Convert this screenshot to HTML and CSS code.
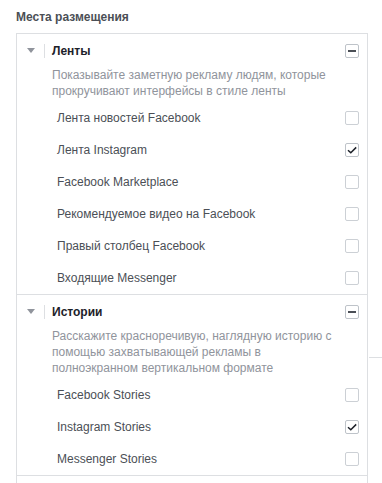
FILE: index.html
```html
<!DOCTYPE html>
<html lang="ru">
<head>
<meta charset="utf-8">
<link rel="stylesheet" href="styles.css">
</head>
<body>
<div class="page">
  <div class="title">Места размещения</div>
  <div class="box">
    <section class="group">
      <div class="group-head">
        <span class="caret"></span>
        <span class="sep"></span>
        <span class="group-name">Ленты</span>
        <span class="cb cb-mixed"></span>
      </div>
      <p class="desc">Показывайте заметную рекламу людям, которые прокручивают интерфейсы в стиле ленты</p>
      <ul class="items">
        <li class="item"><span>Лента новостей Facebook</span><span class="cb"></span></li>
        <li class="item"><span>Лента Instagram</span><span class="cb cb-checked"><svg viewBox="0 0 12 12" width="12" height="12"><path d="M2 6.2 L4.8 8.8 L10.2 3.4" fill="none" stroke="#1d2129" stroke-width="1.5"/></svg></span></li>
        <li class="item"><span>Facebook Marketplace</span><span class="cb"></span></li>
        <li class="item"><span>Рекомендуемое видео на Facebook</span><span class="cb"></span></li>
        <li class="item"><span>Правый столбец Facebook</span><span class="cb"></span></li>
        <li class="item"><span>Входящие Messenger</span><span class="cb"></span></li>
      </ul>
    </section>
    <section class="group">
      <div class="group-head">
        <span class="caret"></span>
        <span class="sep"></span>
        <span class="group-name">Истории</span>
        <span class="cb cb-mixed"></span>
      </div>
      <p class="desc">Расскажите красноречивую, наглядную историю с помощью захватывающей рекламы в полноэкранном вертикальном формате</p>
      <ul class="items">
        <li class="item"><span>Facebook Stories</span><span class="cb"></span></li>
        <li class="item"><span>Instagram Stories</span><span class="cb cb-checked"><svg viewBox="0 0 12 12" width="12" height="12"><path d="M2 6.2 L4.8 8.8 L10.2 3.4" fill="none" stroke="#1d2129" stroke-width="1.5"/></svg></span></li>
        <li class="item"><span>Messenger Stories</span><span class="cb"></span></li>
      </ul>
    </section>
    <section class="group group-empty"></section>
  </div>
</div>
<div class="side-line"></div>
</body>
</html>
```
FILE: styles.css
```css
html, body {
  margin: 0;
  padding: 0;
  background: #ffffff;
}
body {
  font-family: "Liberation Sans", Arial, sans-serif;
  font-size: 12px;
  color: #4b4f56;
  overflow: hidden;
  height: 483px;
}
.page {
  padding: 9px 14px 0 16px;
}
.title {
  font-weight: bold;
  line-height: 16px;
  color: #4b4f56;
}
.box {
  margin-top: 8px;
  border: 1px solid #dddfe2;
  border-bottom: none;
  height: 460px;
}
.group {
  border-bottom: 1px solid #dddfe2;
  padding-bottom: 0;
}
.group-empty {
  border-bottom: none;
}
.group-head {
  display: flex;
  align-items: center;
  height: 16px;
  padding: 9px 8px 0 10px;
}
.caret {
  width: 0;
  height: 0;
  border-left: 4px solid transparent;
  border-right: 4px solid transparent;
  border-top: 5px solid #90949c;
  margin-top: -1px;
}
.sep {
  width: 1px;
  height: 14px;
  background: #dddfe2;
  margin-left: 9px;
}
.group-name {
  margin-left: 7px;
  font-weight: bold;
  color: #1d2129;
  line-height: 16px;
  flex: 1;
}
.desc {
  margin: 8px 0 3px 35px;
  width: 295px;
  line-height: 16px;
  color: #90949c;
}
.items {
  list-style: none;
  margin: 0;
  padding: 0;
}
.item {
  display: flex;
  align-items: center;
  justify-content: space-between;
  height: 32px;
  padding: 0 8px 0 40px;
  line-height: 16px;
  color: #4b4f56;
}
.cb {
  box-sizing: border-box;
  width: 14px;
  height: 14px;
  border: 1px solid #ccd0d5;
  border-radius: 2px;
  background: #fff;
  display: flex;
  align-items: center;
  justify-content: center;
  flex: none;
}
.cb-checked {
  border-color: #bec3c9;
}
.cb-mixed {
  border-color: #bec3c9;
}
.cb-mixed::before {
  content: "";
  width: 8px;
  height: 2px;
  background: #4b4f56;
}
.side-line {
  position: absolute;
  left: 369px;
  top: 357px;
  width: 13px;
  height: 1px;
  background: #dddfe2;
}
```
